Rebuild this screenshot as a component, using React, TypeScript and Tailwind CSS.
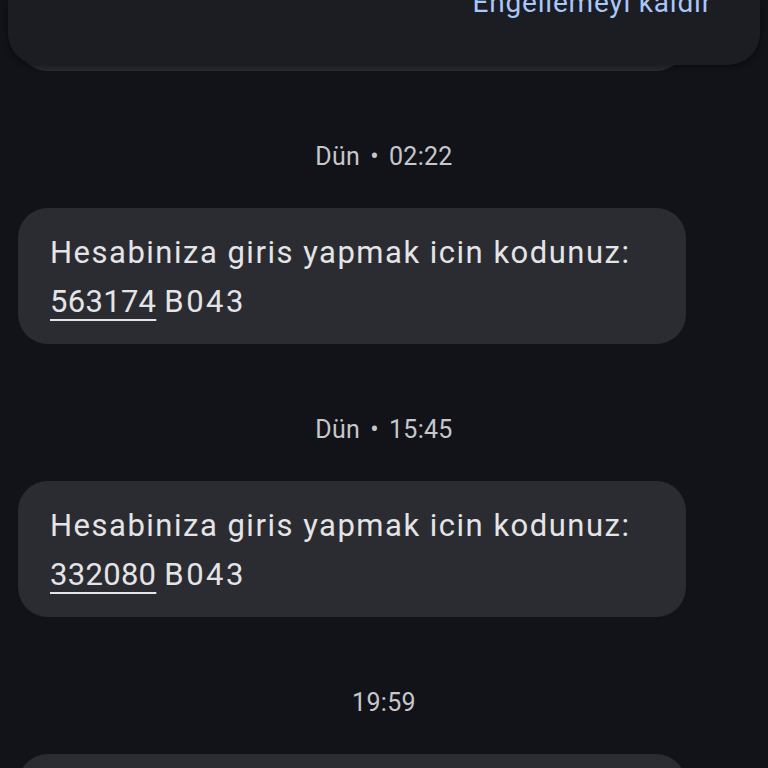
import React from 'react';

type Msg = { day?: string; time: string; code?: string };

const messages: Msg[] = [
  { day: 'Dün', time: '02:22', code: '563174' },
  { day: 'Dün', time: '15:45', code: '332080' },
  { time: '19:59', code: '718245' },
];

function Bubble({ code }: { code?: string }) {
  return (
    <div className="mx-[18px] w-[668px] rounded-[30px] bg-[#2b2c31] pl-[32px] pr-6 pt-5 pb-[18px] text-[31px] leading-[49px] text-[#e4e4e7]">
      <div className="tracking-[1.5px]">Hesabiniza giris yapmak icin kodunuz:</div>
      <div className="tracking-[0.3px]">
        <span className="underline decoration-2 underline-offset-[7px]">{code}</span>{' '}
        <span className="tracking-[2.5px]">B043</span>
      </div>
    </div>
  );
}

export default function App() {
  return (
    <div
      className="relative h-[768px] w-[768px] overflow-hidden bg-[#121318]"
      style={{ fontFamily: 'Roboto, "Noto Sans", sans-serif' }}
    >
      {/* message list */}
      <div className="flex flex-col">
        <div className="-mt-[65px]">
          <Bubble code="104512" />
        </div>
        {messages.map((m) => (
          <div key={m.time} className="flex flex-col">
            <div className="mt-[70px] mb-[35px] text-center text-[25px] leading-[32px] tracking-[0.3px] text-[#c6c7cc]">
              {m.day && (
                <>
                  {m.day}
                  <span className="mx-[10px]">•</span>
                </>
              )}
              {m.time}
            </div>
            <Bubble code={m.code} />
          </div>
        ))}
      </div>

      {/* banner card over the list */}
      <div className="absolute left-2 right-2 top-0 h-[65px] rounded-b-[32px] bg-[#1c1d22] shadow-[0_2px_6px_rgba(0,0,0,0.45)]">
        <div className="-mt-[15px] flex justify-end pr-[48px] text-[28px] leading-[36px] tracking-[0.8px] text-[#a8c7fa]">
          Engellemeyi kaldır
        </div>
      </div>
    </div>
  );
}
